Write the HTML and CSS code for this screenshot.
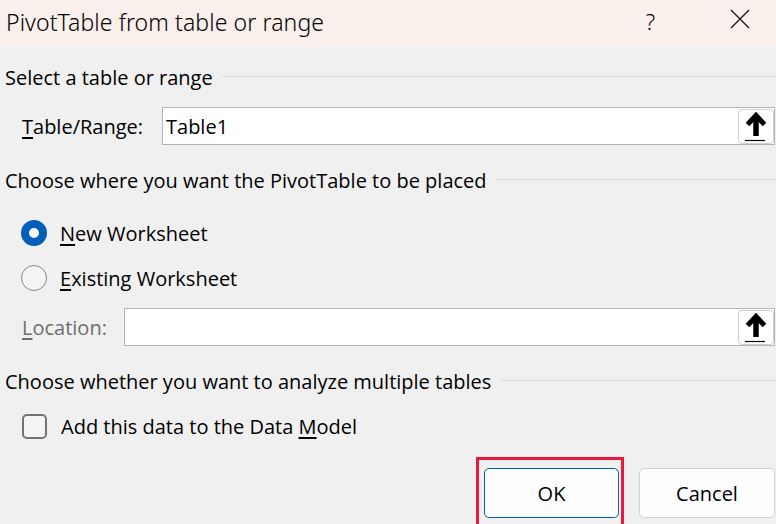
FILE: index.html
```html
<!DOCTYPE html>
<html lang="en">
  <head>
    <meta charset="UTF-8" />
    <title>PivotTable from table or range</title>
    <link rel="stylesheet" href="styles.css">
  </head>
  <body>
    <div class="dialog">
      <div class="titlebar">
        <span class="title">PivotTable from table or range</span>
        <span class="help">?</span>
        <svg class="close" width="20" height="20" viewBox="0 0 20 20">
          <path d="M1 1 L19 19 M19 1 L1 19" stroke="#1a1a1a" stroke-width="1.4" fill="none" />
        </svg>
      </div>

      <div class="content">
        <div class="group-title first">Select a table or range</div>
        <div class="field-row">
          <label class="label label-range"><u>T</u>able/Range:</label>
          <div class="input">
            <span class="value">Table1</span>
            <span class="picker">
              <svg width="36" height="35" viewBox="0 0 36 35">
                <path d="M18 27 V8" stroke="#000" stroke-width="5.5" fill="none" />
                <path d="M9.5 15.5 L18 6.5 L26.5 15.5" stroke="#000" stroke-width="5" fill="none" />
                <path d="M7 31.5 H27" stroke="#000" stroke-width="1.2" />
              </svg>
            </span>
          </div>
        </div>

        <div class="group-title second">Choose where you want the PivotTable to be placed</div>
        <div class="option first-option">
          <span class="radio checked"></span>
          <span><u>N</u>ew Worksheet</span>
        </div>
        <div class="option second-option">
          <span class="radio"></span>
          <span><u>E</u>xisting Worksheet</span>
        </div>
        <div class="field-row location-row">
          <label class="label label-loc disabled"><u>L</u>ocation:</label>
          <div class="input">
            <span class="value"></span>
            <span class="picker">
              <svg width="36" height="35" viewBox="0 0 36 35">
                <path d="M18 27 V8" stroke="#000" stroke-width="5.5" fill="none" />
                <path d="M9.5 15.5 L18 6.5 L26.5 15.5" stroke="#000" stroke-width="5" fill="none" />
                <path d="M7 31.5 H27" stroke="#000" stroke-width="1.2" />
              </svg>
            </span>
          </div>
        </div>

        <div class="group-title third">Choose whether you want to analyze multiple tables</div>
        <div class="option check-option">
          <span class="checkbox"></span>
          <span>Add this data to the Data <u>M</u>odel</span>
        </div>

        <div class="buttons">
          <span class="highlight">
            <button class="btn btn-primary">OK</button>
          </span>
          <button class="btn">Cancel</button>
        </div>
      </div>
    </div>
  </body>
</html>
```

FILE: styles.css
```css
*,
*::before,
*::after {
  box-sizing: border-box;
}

body {
  margin: 0;
  background-color: #f0f0f0;
  font-family: "Open Sans", "Noto Sans", sans-serif;
  font-size: 20px;
  color: #000;
  overflow: hidden;
}

.dialog {
  width: 776px;
  height: 524px;
}

.titlebar {
  display: flex;
  align-items: center;
  height: 46px;
  padding-left: 6px;
  background-color: #f9f0ec;
}

.title {
  flex: 1;
  font-family: "Noto Sans", sans-serif;
  font-size: 23px;
  font-weight: 300;
  letter-spacing: 0.1px;
  margin-top: -2px;
}

.help {
  font-family: "Noto Sans", sans-serif;
  font-size: 22px;
  font-weight: 300;
  margin-right: 75px;
  margin-top: -4px;
}

.close {
  margin-right: 26px;
  margin-top: -9px;
}

.content {
  padding: 0 1px 0 5px;
}

.group-title {
  display: flex;
  align-items: center;
  height: 28px;
  line-height: 28px;
  white-space: nowrap;
}

.group-title::after {
  content: "";
  flex: 1;
  height: 1px;
  margin-left: 9px;
  margin-top: -3px;
  background-color: #dcdcdc;
}

.group-title.first {
  margin-top: 18px;
}

.group-title.second {
  margin-top: 22px;
}

.group-title.third {
  margin-top: 22px;
}

.field-row {
  display: flex;
  align-items: center;
  margin-top: 15px;
  padding-left: 17px;
}

.location-row {
  margin-top: 17px;
}

.label {
  flex: none;
}

.label u,
.option u {
  text-underline-offset: 3px;
}

.label-range {
  width: 140px;
}

.label-loc {
  width: 102px;
}

.disabled {
  color: #6d6d6d;
}

.input {
  flex: 1;
  display: flex;
  align-items: center;
  height: 38px;
  background-color: #fff;
  border: 1px solid #b4b4b4;
}

.value {
  flex: 1;
  padding-left: 3px;
}

.picker {
  display: flex;
  width: 36px;
  height: 35px;
  border: 1px solid #cfcfcf;
  border-radius: 4px;
  background-color: #fff;
}

.picker svg {
  margin: -1px;
}

.option {
  display: flex;
  align-items: center;
  height: 26px;
  padding-left: 16px;
}

.first-option {
  margin-top: 25px;
}

.second-option {
  margin-top: 19px;
}

.radio {
  width: 26px;
  height: 26px;
  margin-right: 13px;
  border: 1.5px solid #878787;
  border-radius: 50%;
  background-color: #f4f4f4;
}

.radio.checked {
  border: 8px solid #005fb8;
  background-color: #fff;
}

.checkbox {
  width: 25px;
  height: 25px;
  margin-right: 14px;
  margin-left: 1px;
  border: 2px solid #737373;
  border-radius: 5px;
  background-color: #f4f4f4;
}

.check-option {
  margin-top: 17px;
}

.buttons {
  display: flex;
  margin-top: 18px;
  padding-left: 471px;
}

.highlight {
  display: flex;
  height: 70px;
  padding: 8px 2px 0 5px;
  border: 3px solid #e8193c;
}

.btn {
  width: 136px;
  height: 50px;
  font-family: "Open Sans", "Noto Sans", sans-serif;
  font-size: 20px;
  color: #000;
  background-color: #fdfdfd;
  border: 1px solid #d0d0d0;
  border-radius: 5px;
  margin: 0;
  margin-top: 11px;
  margin-left: 15px;
  padding: 0;
}

.btn-primary {
  width: 135px;
  margin: 0;
  border-color: #005fb8;
}
```
